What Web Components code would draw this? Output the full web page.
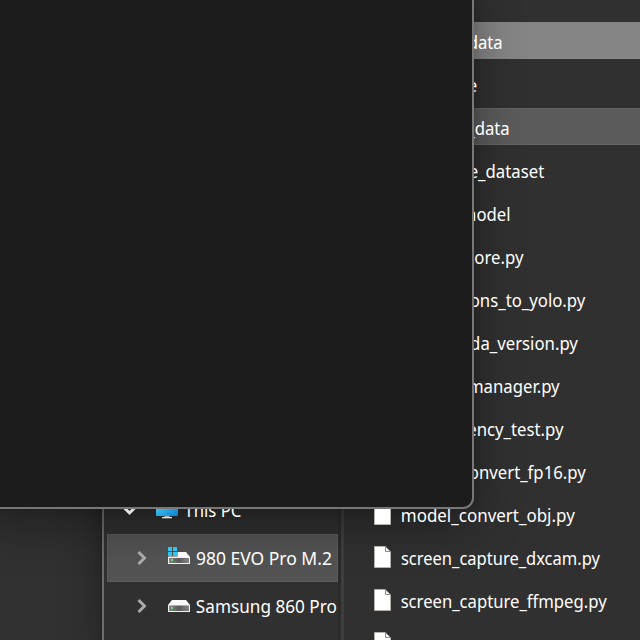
<!DOCTYPE html>
<html lang="en"><head><meta charset="utf-8"><title>Explorer</title>
<style>
html,body{margin:0;width:640px;height:640px;overflow:hidden;background:#303030}
body{font:18px/24px "Noto Sans","Open Sans",sans-serif;color:#fff}
</style></head><body>
<desk-top>
  <explorer-window slot="back">
    <tree-item slot="tree" open kind="pc" label="This PC" width="57"></tree-item>
    <tree-item slot="tree" selected kind="system" label="980 EVO Pro M.2" width="136"></tree-item>
    <tree-item slot="tree" kind="drive" label="Samsung 860 Pro" width="141"></tree-item>
    <file-row selected label="data" end="503"></file-row>
    <file-row label="e" end="477"></file-row>
    <file-row hovered label="_data" end="510"></file-row>
    <file-row label="e_dataset" end="544"></file-row>
    <file-row label="model" end="511"></file-row>
    <file-row label="core.py" end="523"></file-row>
    <file-row label="ons_to_yolo.py" end="585"></file-row>
    <file-row label="da_version.py" end="578"></file-row>
    <file-row label="manager.py" end="560"></file-row>
    <file-row label="ency_test.py" end="564"></file-row>
    <file-row label="onvert_fp16.py" end="586"></file-row>
    <file-row label="model_convert_obj.py" end="575" width="174"></file-row>
    <file-row label="screen_capture_dxcam.py" end="600" width="199"></file-row>
    <file-row label="screen_capture_ffmpeg.py" end="607" width="206"></file-row>
    <file-row label="" end="491" tip></file-row>
  </explorer-window>
  <front-panel slot="front"></front-panel>
</desk-top>
<script>
const mount=(el,html)=>{el.attachShadow({mode:'open'}).innerHTML=html;};

customElements.define('desk-top',class extends HTMLElement{connectedCallback(){mount(this,`
<style>:host{display:block;position:relative;width:640px;height:640px;overflow:hidden;background:#313131}
.back{display:flex;height:100%;padding-left:102px;box-sizing:border-box}
</style><div class="back"><slot name="back"></slot></div><slot name="front"></slot>`);}});

/* The shade sits at level 1, window labels and icons at level 2, the panel face at level 3. */
customElements.define('front-panel',class extends HTMLElement{connectedCallback(){mount(this,`
<style>:host{display:block;position:absolute;left:-20px;top:-20px;width:494px;height:529px}
div{position:absolute;inset:0;border-radius:11px;box-sizing:border-box}
.shade{z-index:1;box-shadow:0 0 6px rgba(0,0,0,.12),0 14px 48px rgba(0,0,0,.38)}
.face{z-index:3;background:#1c1c1c;border:2px solid #777}</style><div class="shade"></div><div class="face"></div>`);}});

customElements.define('explorer-window',class extends HTMLElement{connectedCallback(){mount(this,`
<style>:host{display:flex;flex:1;min-width:0;box-sizing:border-box;border-left:2px solid #6d6d6d;background:#303030;
box-shadow:0 0 6px rgba(0,0,0,.2),0 8px 42px rgba(0,0,0,.32)}
nav{display:flex;flex-direction:column;width:234px;box-sizing:border-box;padding:486px 0 0 3px;flex:none;overflow:hidden}
.split{flex:none;width:6px;box-sizing:border-box;background:#2b2b2b;border-right:3px solid #3e3e3e}
main{flex:1;min-width:0;display:flex;flex-direction:column;gap:6px;padding-top:22px;overflow:hidden}
</style><nav><slot name="tree"></slot></nav><div class="split"></div><main><slot></slot></main>`);}});

const ICONS={
pc:`<svg width="24" height="24" viewBox="0 0 24 24"><defs><linearGradient id="g" x2="1" y2="1"><stop stop-color="#4fd8f0"/><stop offset="1" stop-color="#0d7fd6"/></linearGradient></defs><rect x="1" y="2" width="22" height="16" rx="1" fill="url(#g)"/><path d="M9.500 18h5v1h-5z" fill="#a9b4ba"/><path d="M7 19h10v1.300H7z" fill="#dfe5e8"/></svg>`,
drive:`<svg width="24" height="24" viewBox="0 0 24 24"><defs><linearGradient id="g" x2="1" y2="0"><stop stop-color="#858585"/><stop offset=".5" stop-color="#595959"/><stop offset="1" stop-color="#858585"/></linearGradient></defs><path d="M5 6h14l4 5H1z" fill="#f8f8f8"/><path d="M1 11h22v7H1z" fill="#f0f0f0"/><path d="M2 11.500h20v5.500H2z" fill="url(#g)"/><rect x="4" y="13" width="2" height="2" fill="#5fe36d"/></svg>`,
system:`<svg width="24" height="24" viewBox="0 0 24 24"><defs><linearGradient id="g" x2="1" y2="0"><stop stop-color="#858585"/><stop offset=".5" stop-color="#595959"/><stop offset="1" stop-color="#858585"/></linearGradient></defs><path d="M5 6h14l4 5H1z" fill="#f8f8f8"/><path d="M1 11h22v7H1z" fill="#f0f0f0"/><path d="M2 12h20v5H2z" fill="url(#g)"/><rect x="4" y="13" width="2" height="2" fill="#5fe36d"/><path d="M0 0h10.500v10.500H0z" fill="#4b4b4b"/><path d="M1 1h4v4H1zM6 1h4v4H6zM1 6h4v4H1zM6 6h4v4H6z" fill="#35c4f2"/></svg>`};

customElements.define('tree-item',class extends HTMLElement{connectedCallback(){
const open=this.hasAttribute('open');mount(this,`
<style>:host{display:flex;align-items:center;height:48px;flex:none;box-sizing:border-box;padding-left:27px;overflow:hidden}
:host([open]){padding-left:15px}
:host([selected]){background:#535353;box-shadow:inset 0 0 0 1px #5b5b5b}
svg{position:relative;z-index:2}
.chev{width:16px;height:16px;flex:none;margin-right:17px}
.icon{display:flex;margin-right:5px}
</style>
<svg class="chev" viewBox="0 0 16 16" fill="none" stroke="${open?'#e4e4e4':'#aaa'}" stroke-width="3"><path d="${open?'M1.500 5l6 6 6-6':'M4.500 2l6 6-6 6'}"/></svg>
<span class="icon">${ICONS[this.getAttribute('kind')]}</span>
<fit-text width="${this.getAttribute('width')}">${this.getAttribute('label')}</fit-text>`);}});

customElements.define('file-row',class extends HTMLElement{connectedCallback(){
const w=this.getAttribute('width');mount(this,`
<style>:host{display:flex;align-items:center;height:37px;flex:none;padding-left:29px}
:host([selected]){background:#858585}
:host([hovered]){background:#5b5b5b;box-shadow:inset 0 1px #656565,inset 0 -1px #656565}
svg{flex:none;margin:1px 9px 0 0;position:relative;z-index:2}
.name{display:flex;justify-content:flex-end;width:${this.getAttribute('end')-401}px;margin-top:2px}
:host([tip]) .name::after{content:"";width:2px;height:8px;background:#bbb}
</style>
<svg width="19" height="24" viewBox="0 0 19 24"><path d="M1.500 1.500h11l5 5v16h-16z" fill="#fff" stroke="#b5b0aa"/><path d="M12.500 1.500v5h5z" fill="#f4f4f4" stroke="#8d8985"/></svg>
<span class="name">${this.getAttribute('label')?`<fit-text ${w?`width="${w}"`:''}>${this.getAttribute('label')}</fit-text>`:''}</span>`);}});

/* Condenses its text to a given width, or by the common ratio when it has none. */
customElements.define('fit-text',class extends HTMLElement{connectedCallback(){mount(this,`
<style>:host{display:flex;justify-content:flex-end;white-space:nowrap;height:24px;position:relative;z-index:2}
span{display:block;flex:none;transform-origin:100% 50%}</style><span><slot></slot></span>`);
const s=this.shadowRoot.querySelector('span'),n=s.getBoundingClientRect().width;
if(!n)return;
const w=Number(this.getAttribute('width'))||n*.93;
this.style.width=w+'px';s.style.transform=`scaleX(${w/n})`;}});
</script>
</body></html>
